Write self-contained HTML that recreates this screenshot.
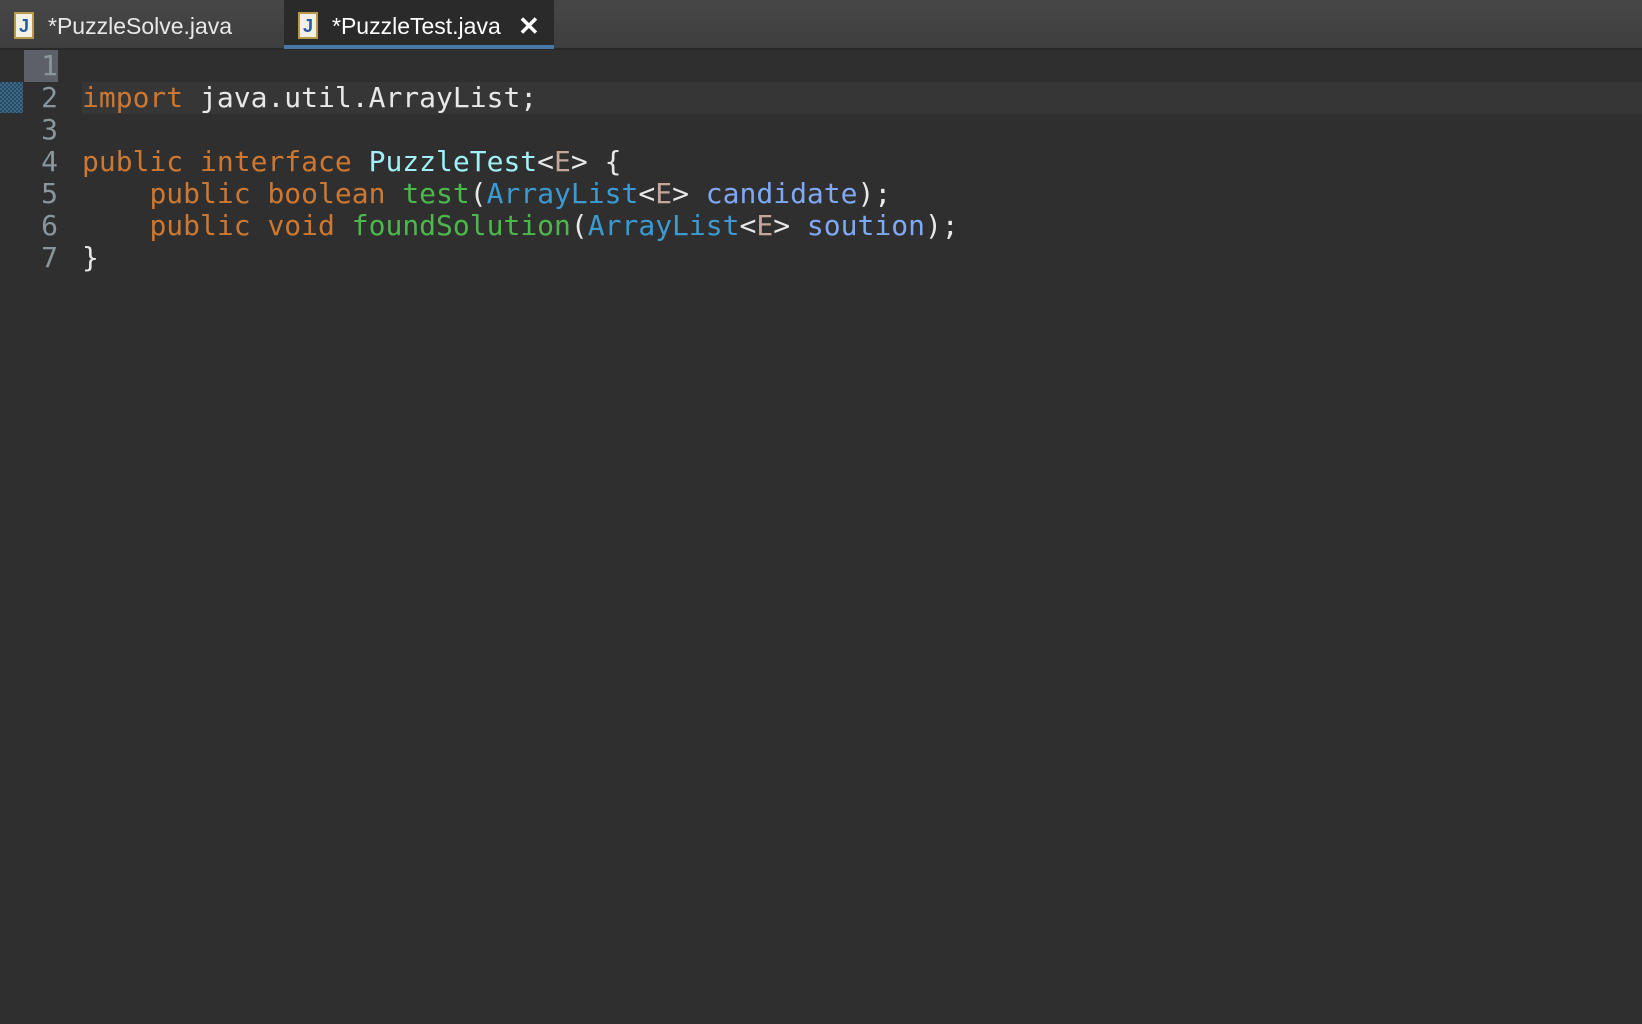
<!DOCTYPE html>
<html><head><style>
body{margin:0;width:1642px;height:1024px;background:#2f2f2f;overflow:hidden;font-family:"Liberation Sans",sans-serif}
.bar{position:absolute;left:0;top:0;width:1642px;height:48px;background:linear-gradient(#474747,#3e3e3e);border-bottom:2px solid #292929}
.tab{position:absolute;top:0;height:48px;color:#e8e8e8;font-size:23px;line-height:52px}
.act{left:284px;width:270px;background:#2a2a2a;border-bottom:4px solid #4a78a6;height:45px;color:#fff}
.ic{position:absolute;top:12px;width:20px;height:27px;background:#f3f0e6;border:2px solid #b89a4a;box-sizing:border-box;color:#2a5a9a;font:bold 18px/24px "Liberation Sans";text-align:center}
.code{position:absolute;left:0;top:50px;font-family:"DejaVu Sans Mono",monospace;font-size:28px;line-height:32px;color:#e8e8e8}
.ln{position:absolute;left:24px;width:34px;text-align:right;color:#8a969c}
.l{position:absolute;left:82px;white-space:pre}
.k{color:#cc7833}.t{color:#9ff1f5}.g{color:#c2a79a}.f{color:#4cb84c}.c{color:#3d9ad1}.p{color:#7fa8f5}
</style></head><body>
<div class="bar">
<div class="tab" style="left:14px;width:270px"><div class="ic" style="left:0">J</div><span style="position:absolute;left:34px">*PuzzleSolve.java</span></div>
<div class="tab act"><div class="ic" style="left:14px">J</div><span style="position:absolute;left:48px">*PuzzleTest.java</span><span style="position:absolute;left:234px;font-weight:bold;font-size:26px">✕</span></div>
</div>
<div style="position:absolute;left:24px;top:50px;width:34px;height:32px;background:#5d6068"></div>
<div style="position:absolute;left:82px;top:82px;width:1560px;height:32px;background:#363636"></div>
<div style="position:absolute;left:0;top:82px;width:23px;height:31px;background:repeating-conic-gradient(#3a6a8c 0 25%,#2a4a60 0 50%) 0 0/4px 4px"></div>
<div class="code">
<div class="ln" style="top:0">1</div><div class="ln" style="top:32px">2</div><div class="ln" style="top:64px">3</div><div class="ln" style="top:96px">4</div><div class="ln" style="top:128px">5</div><div class="ln" style="top:160px">6</div><div class="ln" style="top:192px">7</div>
<div class="l" style="top:32px"><span class="k">import</span> java.util.ArrayList;</div>
<div class="l" style="top:96px"><span class="k">public</span> <span class="k">interface</span> <span class="t">PuzzleTest</span>&lt;<span class="g">E</span>&gt; {</div>
<div class="l" style="top:128px">    <span class="k">public</span> <span class="k">boolean</span> <span class="f">test</span>(<span class="c">ArrayList</span>&lt;<span class="g">E</span>&gt; <span class="p">candidate</span>);</div>
<div class="l" style="top:160px">    <span class="k">public</span> <span class="k">void</span> <span class="f">foundSolution</span>(<span class="c">ArrayList</span>&lt;<span class="g">E</span>&gt; <span class="p">soution</span>);</div>
<div class="l" style="top:192px">}</div>
</div>
</body></html>
